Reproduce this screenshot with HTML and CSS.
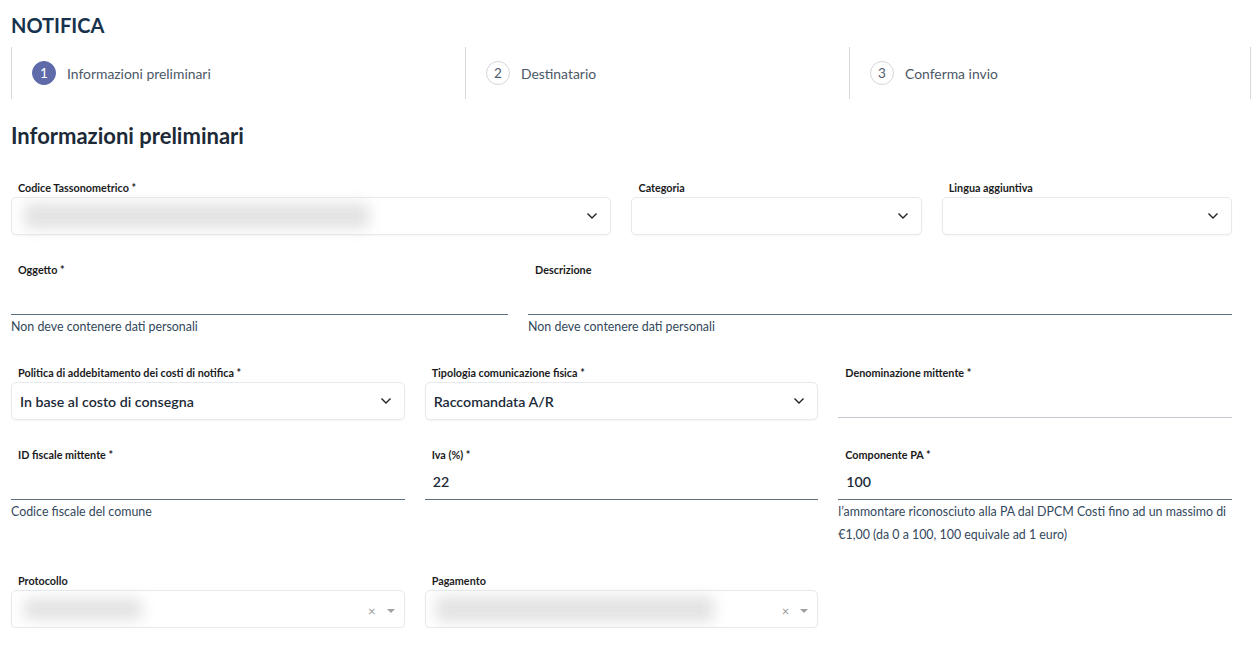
FILE: index.html
```html
<!DOCTYPE html>
<html lang="it">
<head>
<meta charset="utf-8">
<title>Notifica</title>
<link rel="stylesheet" href="styles.css">
</head>
<body>
<div class="page">
  <h1 class="page-title">NOTIFICA</h1>

  <div class="stepper">
    <div class="step step-active"><span class="step-num">1</span><span class="step-label">Informazioni preliminari</span></div>
    <div class="step"><span class="step-num">2</span><span class="step-label">Destinatario</span></div>
    <div class="step step-last"><span class="step-num">3</span><span class="step-label">Conferma invio</span></div>
  </div>

  <h2 class="section-title">Informazioni preliminari</h2>

  <div class="form-grid">
    <div class="field span-6">
      <label class="label">Codice Tassonometrico *</label>
      <div class="select"><span class="blur blur-codice"></span><svg class="chev" width="12" height="8" viewBox="0 0 12 8"><path d="M1.5 1.5l4.5 4.5 4.5-4.5" fill="none" stroke="#222" stroke-width="1.4"/></svg></div>
    </div>
    <div class="field span-3">
      <label class="label">Categoria</label>
      <div class="select"><span class="value"></span><svg class="chev" width="12" height="8" viewBox="0 0 12 8"><path d="M1.5 1.5l4.5 4.5 4.5-4.5" fill="none" stroke="#222" stroke-width="1.4"/></svg></div>
    </div>
    <div class="field span-3">
      <label class="label">Lingua aggiuntiva</label>
      <div class="select"><span class="value"></span><svg class="chev" width="12" height="8" viewBox="0 0 12 8"><path d="M1.5 1.5l4.5 4.5 4.5-4.5" fill="none" stroke="#222" stroke-width="1.4"/></svg></div>
    </div>

    <div class="field span-5">
      <label class="label">Oggetto *</label>
      <div class="text-input"></div>
      <div class="helper">Non deve contenere dati personali</div>
    </div>
    <div class="field span-7">
      <label class="label">Descrizione</label>
      <div class="text-input"></div>
      <div class="helper">Non deve contenere dati personali</div>
    </div>

    <div class="field span-4">
      <label class="label">Politica di addebitamento dei costi di notifica *</label>
      <div class="select"><span class="value">In base al costo di consegna</span><svg class="chev" width="12" height="8" viewBox="0 0 12 8"><path d="M1.5 1.5l4.5 4.5 4.5-4.5" fill="none" stroke="#222" stroke-width="1.4"/></svg></div>
    </div>
    <div class="field span-4">
      <label class="label">Tipologia comunicazione fisica *</label>
      <div class="select"><span class="value">Raccomandata A/R</span><svg class="chev" width="12" height="8" viewBox="0 0 12 8"><path d="M1.5 1.5l4.5 4.5 4.5-4.5" fill="none" stroke="#222" stroke-width="1.4"/></svg></div>
    </div>
    <div class="field span-4">
      <label class="label">Denominazione mittente *</label>
      <div class="text-input text-input-disabled"></div>
    </div>

    <div class="field span-4">
      <label class="label">ID fiscale mittente *</label>
      <div class="text-input"></div>
      <div class="helper">Codice fiscale del comune</div>
    </div>
    <div class="field span-4">
      <label class="label">Iva (%) *</label>
      <div class="text-input"><span class="value">22</span></div>
    </div>
    <div class="field span-4">
      <label class="label">Componente PA *</label>
      <div class="text-input"><span class="value">100</span></div>
      <div class="helper">l’ammontare riconosciuto alla PA dal DPCM Costi fino ad un massimo di €1,00 (da 0 a 100, 100 equivale ad 1 euro)</div>
    </div>

    <div class="field span-4">
      <label class="label">Protocollo</label>
      <div class="select select-search"><span class="blur blur-protocollo"></span><span class="clear">×</span><span class="caret"></span></div>
    </div>
    <div class="field span-4">
      <label class="label">Pagamento</label>
      <div class="select select-search"><span class="blur blur-pagamento"></span><span class="clear">×</span><span class="caret"></span></div>
    </div>
  </div>
</div>
</body>
</html>
```

FILE: styles.css
```css
* { box-sizing: border-box; }

html, body {
  margin: 0;
  padding: 0;
  background: #ffffff;
}

body {
  font-family: Lato, "Open Sans", sans-serif;
  color: #17324d;
}

.page {
  padding: 13px 6px 0 11px;
}

.page-title {
  margin: 0;
  font-size: 20px;
  line-height: 24px;
  font-weight: 700;
  color: #17324d;
}

.stepper {
  margin-top: 10px;
  display: grid;
  grid-template-columns: 454fr 384fr 402fr;
  height: 52px;
}

.step {
  display: flex;
  align-items: center;
  gap: 11px;
  padding-left: 20px;
  border-left: 1px solid #d6d9dc;
}

.step-last {
  border-right: 1px solid #d6d9dc;
}

.step-num {
  width: 24px;
  height: 24px;
  border-radius: 50%;
  border: 1px solid #d3d7db;
  display: flex;
  align-items: center;
  justify-content: center;
  font-size: 13.5px;
  color: #4f5d6b;
  background: #fff;
}

.step-active .step-num {
  background: #5f6ba9;
  border-color: #5f6ba9;
  color: #ffffff;
}

.step-label {
  font-size: 13.9px;
  color: #4c5866;
}

.section-title {
  margin: 25px 0 0;
  font-size: 22px;
  line-height: 24px;
  font-weight: 700;
  color: #1c2a38;
}

.form-grid {
  margin-top: 33px;
  width: 1221px;
  display: grid;
  grid-template-columns: repeat(12, 1fr);
  column-gap: 20px;
  row-gap: 28px;
  align-items: start;
}

.span-3 { grid-column: span 3; }
.span-4 { grid-column: span 4; }
.span-5 { grid-column: span 5; }
.span-6 { grid-column: span 6; }
.span-7 { grid-column: span 7; }

.field {
  display: flex;
  flex-direction: column;
}

.label {
  display: block;
  padding-left: 7px;
  font-size: 10.8px;
  line-height: 14px;
  font-weight: 700;
  color: #1b1b1c;
  margin-bottom: 2px;
}

.select {
  position: relative;
  height: 38px;
  border: 1px solid #e6e9ed;
  border-radius: 5px;
  box-shadow: 0 1px 2px rgba(0, 0, 0, 0.04);
  display: flex;
  align-items: center;
  padding: 0 12px 0 8px;
  background: #fff;
}

.select .value {
  flex: 1;
  font-size: 14.2px;
  font-weight: 600;
  color: #1c2a38;
}

.chev {
  margin-left: auto;
  flex: none;
}

.blur {
  display: block;
  height: 26px;
  background: #dedede;
  border-radius: 4px;
  filter: blur(7px);
  opacity: 0.85;
}

.blur-codice { width: 345px; margin-left: 4px; }
.blur-protocollo { width: 118px; margin-left: 4px; height: 22px; }
.blur-pagamento { width: 278px; margin-left: 2px; height: 26px; }

.select-search {
  padding-right: 9px;
}

.select-search .clear {
  margin-left: auto;
  margin-top: 4px;
  font-size: 13px;
  color: #9a9a9a;
}

.select-search .caret {
  margin-left: 11px;
  margin-top: 3px;
  width: 0;
  height: 0;
  border-left: 4px solid transparent;
  border-right: 4px solid transparent;
  border-top: 4px solid #a0a0a0;
}

.text-input {
  height: 36px;
  border-bottom: 1px solid #5c6f82;
  display: flex;
  align-items: center;
  padding-left: 8px;
}

.text-input .value {
  font-size: 14.2px;
  font-weight: 600;
  color: #1c2a38;
}

.text-input-disabled {
  border-bottom-color: #c5cad1;
}

.helper {
  font-size: 12.4px;
  line-height: 23px;
  color: #33485c;
}
```
